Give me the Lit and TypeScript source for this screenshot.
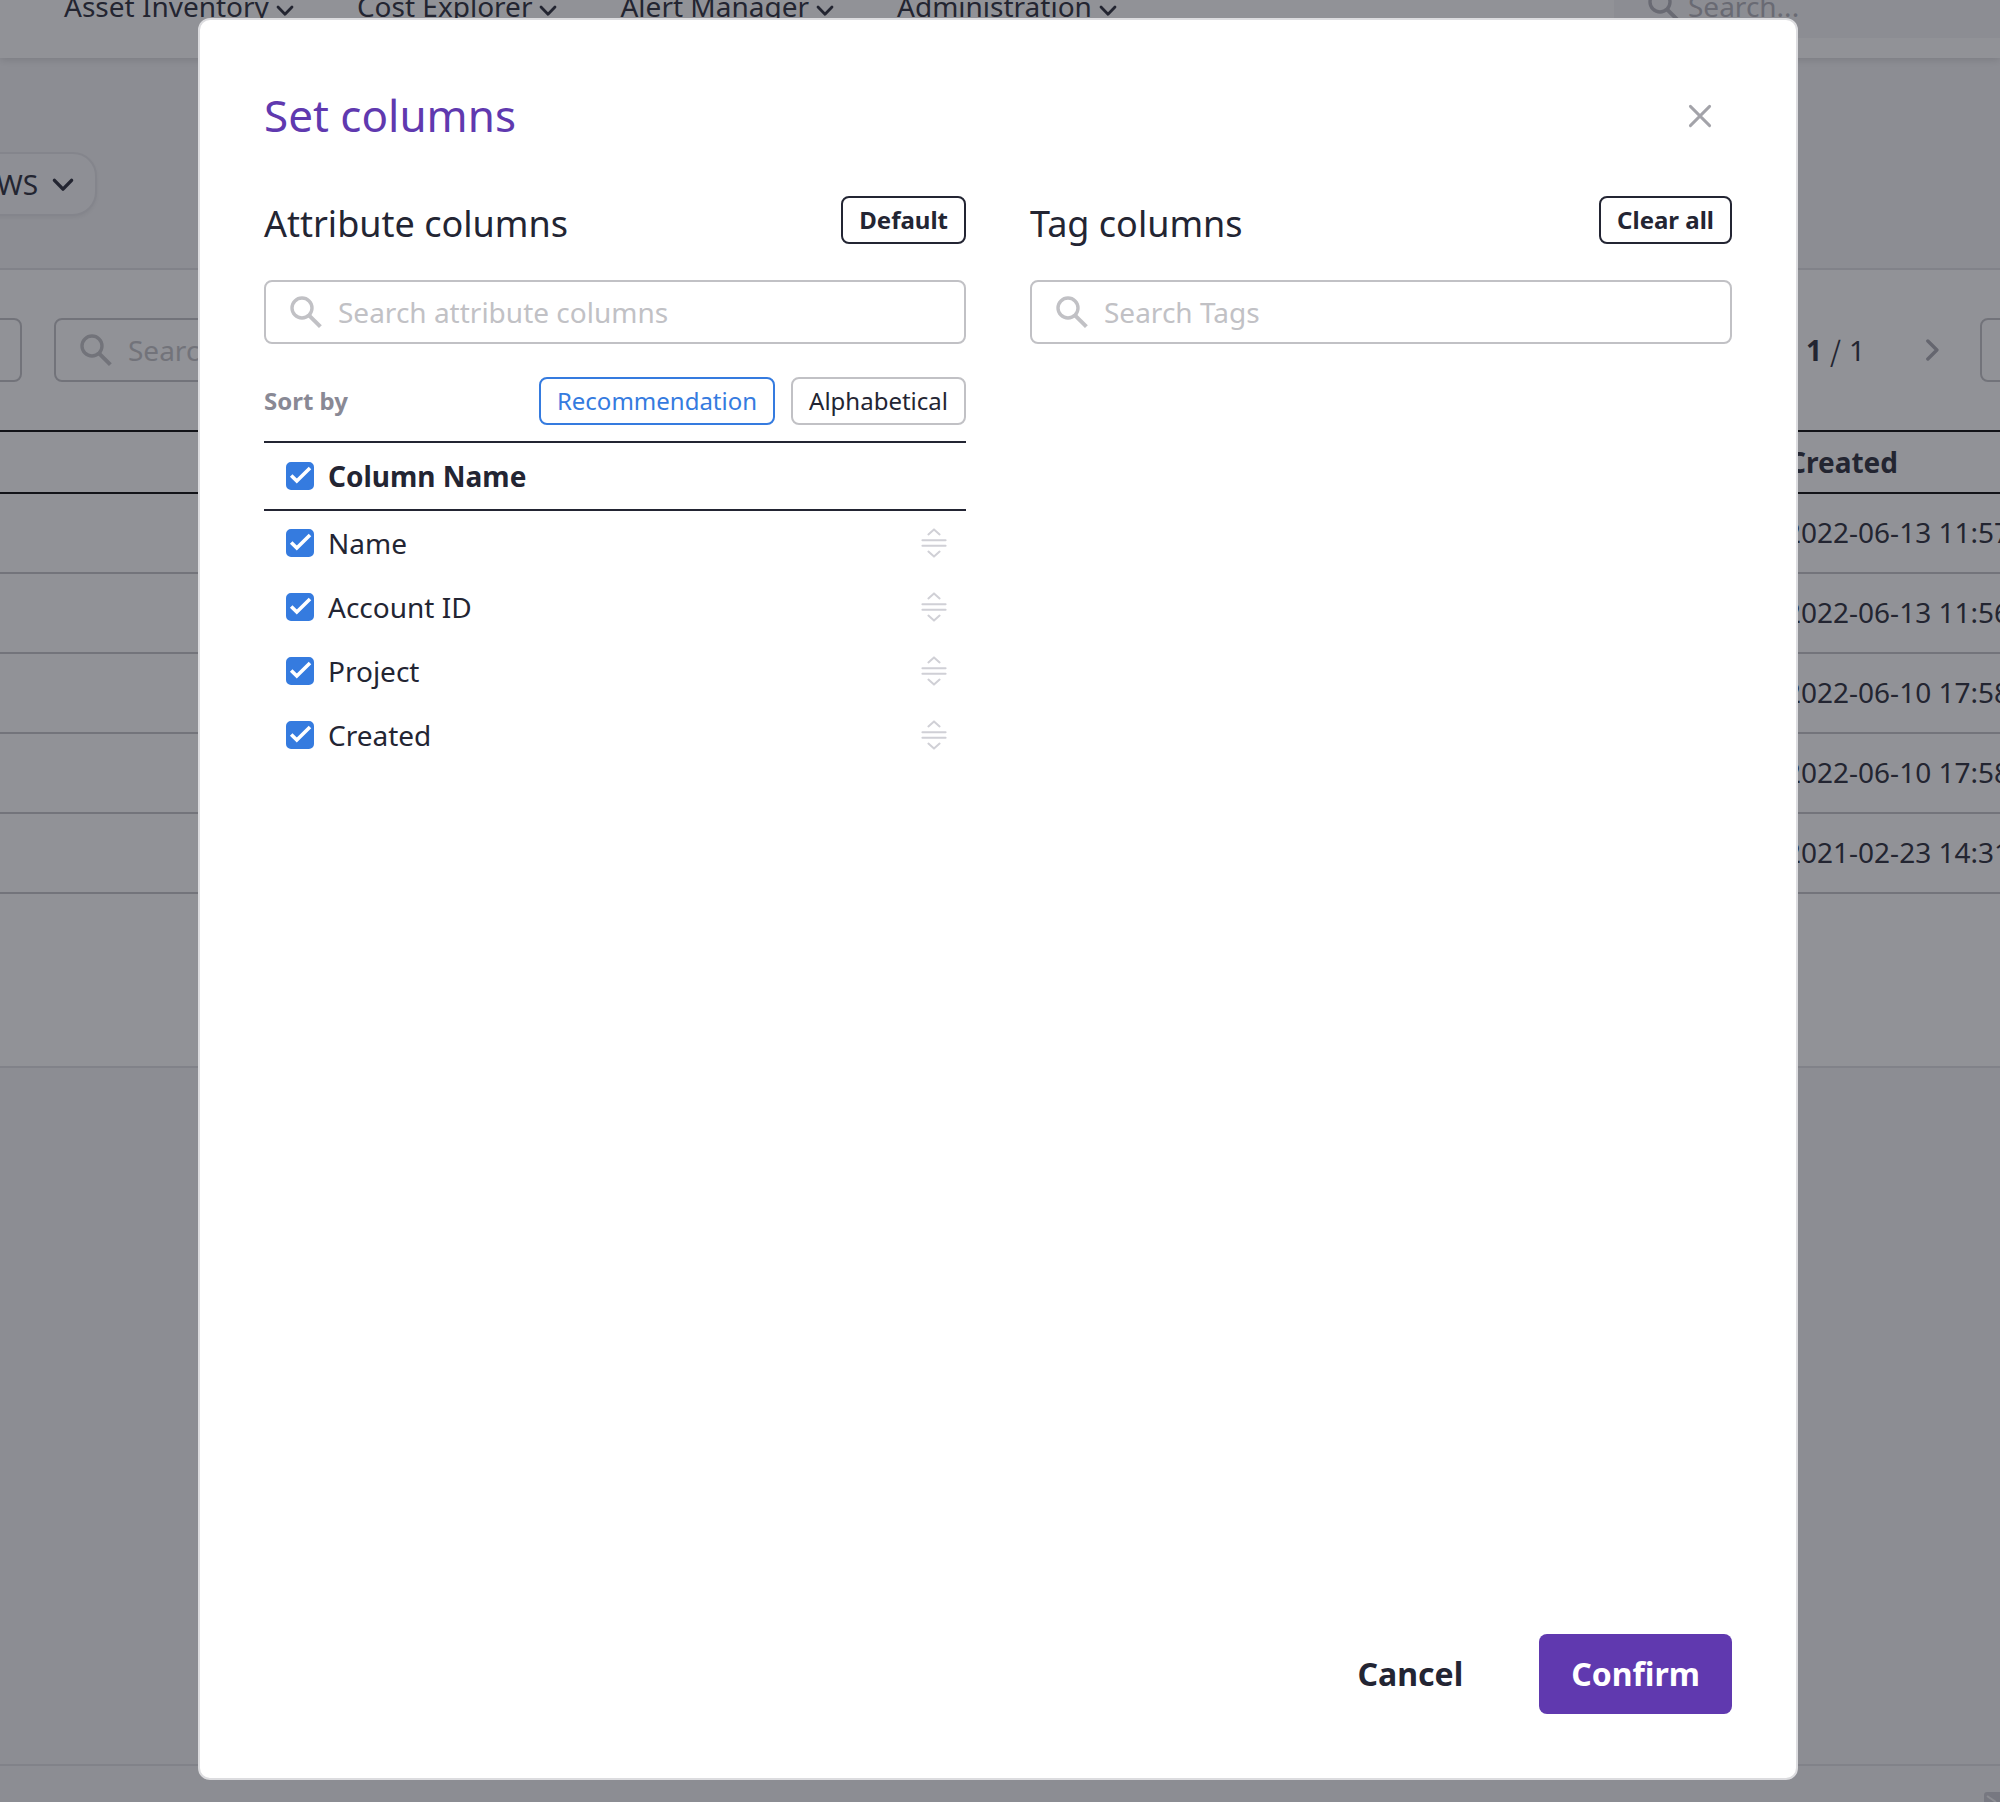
import { LitElement, html, css, svg } from "lit";
import { customElement, property, state } from "lit/decorators.js";
import { classMap } from "lit/directives/class-map.js";

const searchIcon = html`<svg class="search-icon" width="32" height="32" viewBox="0 0 32 32" fill="none" stroke="currentColor" aria-hidden="true">
  <circle cx="12" cy="12" r="10" stroke-width="3.4" />
  <path d="M19 19.4 30.4 30.6" stroke-width="4" />
</svg>`;

const chevron = (size: number, dir: "down" | "right") => html`<svg
  width=${size} height=${size} viewBox="0 0 18 18" fill="none" stroke="currentColor" stroke-width="2.8"
  stroke-linecap="round" stroke-linejoin="round" aria-hidden="true">
  ${dir === "down" ? svg`<path d="M2 6 9 13.2 16 6" />` : svg`<path d="M5.6 1.6 13 9 5.6 16.4" />`}
</svg>`;

const shared = css`
  * { box-sizing: border-box; margin: 0; }
  button, input { font: inherit; color: inherit; }
  button { cursor: pointer; background: none; border: 0; padding: 0; }
  svg { display: block; flex: none; }
  .search {
    display: flex;
    align-items: center;
    gap: 16px;
    height: 64px;
    padding: 0 24px;
    border: 2px solid #c1c1c5;
    border-radius: 8px;
    color: #c1c1c5;
  }
  .search input {
    flex: 1;
    min-width: 0;
    border: 0;
    outline: 0;
    padding: 0;
    background: none;
    color: #232533;
    font-size: 28px;
  }
  .search input::placeholder { color: #c1c1c5; opacity: 1; }
`;

@customElement("inventory-page")
class InventoryPage extends LitElement {
  static styles = [shared, css`
    :host { display: flex; flex-direction: column; height: 100%; background: #f5f5f7; }
    .header {
      position: relative;
      flex: none;
      display: flex;
      align-items: center;
      justify-content: space-between;
      height: 104px;
      margin-top: -46px;
      padding-left: 64px;
      background: #fff;
      box-shadow: 0 2px 8px rgba(0, 0, 0, 0.14);
    }
    .nav { display: flex; gap: 63px; }
    .nav a { display: flex; align-items: center; gap: 7px; color: inherit; text-decoration: none; white-space: nowrap; }
    .nav svg { margin-top: 8px; }
    .header .search { width: 386px; padding: 0 34px; gap: 8px; border: 0; border-radius: 12px 0 0 12px; background: #f5f5f7; color: #aeaeb6; }
    .header .search input::placeholder { color: #aeaeb6; }
    .provider {
      align-self: flex-start;
      flex: none;
      display: flex;
      align-items: center;
      gap: 14px;
      height: 64px;
      margin: 94px 0 52px -62px;
      padding: 0 21px 0 40px;
      border: 2px solid #e4e4e8;
      border-radius: 24px;
      background: #f8f8fa;
      box-shadow: 0 2px 4px rgba(0, 0, 0, 0.06);
    }
    .panel { flex: none; min-height: 800px; padding-top: 48px; border: solid #dfdfe3; border-width: 2px 0; background: #fff; }
    .toolbar { display: flex; align-items: center; height: 64px; margin-bottom: 48px; }
    .box { width: 64px; height: 64px; border: 2px solid #c1c1c5; border-radius: 8px; }
    .box.lead { margin: 0 32px 0 -42px; }
    .toolbar .search { width: 1200px; }
    .pager { display: flex; align-items: center; gap: 56px; margin-left: auto; }
    .pager p { display: flex; gap: 8px; }
    .pager .slash { font-family: "Noto Sans CJK KR", "Noto Sans", sans-serif; }
    .pager button { color: #a7a7af; }
    .box.tail { margin: 0 -44px 0 37px; }
    table { width: 100%; border-collapse: separate; border-spacing: 0; table-layout: fixed; text-align: left; }
    th, td { padding: 0; white-space: nowrap; }
    th { height: 64px; border: solid #000; border-width: 2px 0; }
    td { height: 80px; padding-bottom: 2px; border-bottom: 2px solid #c3c3c7; }
    th.date { width: 215px; padding-left: 3px; }
    .footer { flex: none; height: 38px; margin-top: auto; border-top: 2px solid #dfdfe3; display: flex; justify-content: flex-end; align-items: flex-end; }
  `];

  private nav = ["Asset Inventory", "Cost Explorer", "Alert Manager", "Administration"];
  private dates = ["2022-06-13 11:57", "2022-06-13 11:56", "2022-06-10 17:58", "2022-06-10 17:58", "2021-02-23 14:31"];

  render() {
    return html`
      <header class="header">
        <nav class="nav">${this.nav.map((n) => html`<a href="#">${n}${chevron(18, "down")}</a>`)}</nav>
        <label class="search">${searchIcon}<input aria-label="Search" placeholder="Search..." /></label>
      </header>
      <button class="provider">AWS ${chevron(22, "down")}</button>
      <section class="panel">
        <div class="toolbar">
          <div class="box lead"></div>
          <label class="search">${searchIcon}<input aria-label="Search" placeholder="Search" /></label>
          <div class="pager">
            <p><b>1</b><span class="slash">/</span><span>1</span></p>
            <button aria-label="Next page">${chevron(22, "right")}</button>
          </div>
          <div class="box tail"></div>
        </div>
        <table>
          <thead><tr><th></th><th class="date">Created</th></tr></thead>
          <tbody>${this.dates.map((d) => html`<tr><td></td><td>${d}</td></tr>`)}</tbody>
        </table>
      </section>
      <footer class="footer">
        <svg width="16" height="10" viewBox="0 0 16 10" aria-hidden="true">
          <path d="M0 10V3a3 3 0 0 1 3-3h13v10z" fill="#cbcbd2" />
          <path d="M3 4 12 10" stroke="#f5f5f7" stroke-width="2" />
        </svg>
      </footer>
    `;
  }
}

@customElement("check-field")
class CheckField extends LitElement {
  static styles = [shared, css`
    :host { display: block; }
    label { display: flex; align-items: center; gap: 14px; cursor: pointer; }
    .mark { display: grid; width: 28px; height: 28px; }
    .mark > * { grid-area: 1 / 1; }
    input { appearance: none; width: 28px; height: 28px; border: 2px solid #c1c1c5; border-radius: 5px; background: #fff; }
    input:checked { border-color: #357bdf; background: #357bdf; }
    svg { pointer-events: none; }
    input:not(:checked) + svg { visibility: hidden; }
  `];
  @property() label = "";
  @property({ type: Boolean }) checked = false;

  private toggled(e: Event) {
    this.checked = (e.target as HTMLInputElement).checked;
    this.dispatchEvent(new CustomEvent("toggled", { detail: this.checked }));
  }

  render() {
    return html`<label>
      <span class="mark">
        <input type="checkbox" .checked=${this.checked} @change=${this.toggled} />
        <svg width="28" height="28" viewBox="0 0 28 28" fill="none" stroke="#fff" stroke-width="3.6" aria-hidden="true">
          <path d="M5.2 13.4 10.8 19 24 6" />
        </svg>
      </span>
      ${this.label}
    </label>`;
  }
}

@customElement("set-columns-dialog")
class SetColumnsDialog extends LitElement {
  static styles = [shared, css`
    :host {
      display: flex;
      flex-direction: column;
      width: 100%;
      max-width: 1600px;
      box-sizing: border-box;
      padding: 64px;
      border: 2px solid #dcdcdf;
      border-radius: 12px;
      background: #fff;
    }
    .title-row { display: flex; align-items: flex-start; justify-content: space-between; height: 64px; margin-bottom: 48px; }
    h2 { font-size: 44px; line-height: 62px; font-weight: 400; color: #6039af; }
    .close { display: grid; place-items: center; width: 64px; height: 64px; color: #a3a3a9; }
    .columns { flex: 1; display: grid; grid-template-columns: 1fr 1fr; gap: 64px; align-items: start; }
    .heading { display: flex; align-items: flex-start; justify-content: space-between; margin-bottom: 28px; height: 56px; }
    h3 { font-size: 36px; line-height: 56px; font-weight: 400; }
    .small {
      height: 48px;
      padding: 0 16px;
      border: 2px solid #c1c1c5;
      border-radius: 8px;
      font-size: 24px;
      line-height: 44px;
    }
    .small.strong { border-color: #232533; font-weight: 700; }
    .small.active { border-color: #357bdf; color: #357bdf; }
    .sort { display: flex; align-items: center; gap: 16px; margin: 33px 0 16px; }
    .sort span { margin-right: auto; font-size: 24px; font-weight: 700; color: #898995; }
    .list-head { display: flex; align-items: center; height: 70px; padding: 0 22px; border: solid #232533; border-width: 2px 0; font-weight: 700; }
    ul { list-style: none; padding: 0; }
    li { display: flex; align-items: center; justify-content: space-between; height: 64px; padding: 0 16px 0 22px; }
    .actions { display: flex; justify-content: flex-end; gap: 44px; font-size: 32px; font-weight: 700; }
    .actions button { height: 80px; padding: 0 32px; border-radius: 8px; }
    .confirm { background: #6039af; color: #fff; }
  `];

  @state() private sortBy = "Recommendation";
  @state() private rows = ["Name", "Account ID", "Project", "Created"].map((name) => ({ name, on: true }));

  private setAll(on: boolean) {
    this.rows = this.rows.map((r) => ({ ...r, on }));
  }

  private setRow(i: number, on: boolean) {
    this.rows = this.rows.map((r, j) => (j === i ? { ...r, on } : r));
  }

  render() {
    return html`
      <div class="title-row">
        <h2>Set columns</h2>
        <button class="close" aria-label="Close">
          <svg width="24" height="24" viewBox="0 0 24 24" stroke="currentColor" stroke-width="2.9" stroke-linecap="round" aria-hidden="true">
            <path d="M2.4 2.4 21.6 21.6M21.6 2.4 2.4 21.6" />
          </svg>
        </button>
      </div>
      <div class="columns">
        <section>
          <div class="heading"><h3>Attribute columns</h3><button class="small strong" @click=${() => this.setAll(true)}>Default</button></div>
          <label class="search">${searchIcon}<input aria-label="Search attribute columns" placeholder="Search attribute columns" /></label>
          <div class="sort">
            <span>Sort by</span>
            ${["Recommendation", "Alphabetical"].map((s) => html`<button
              class=${classMap({ small: true, active: s === this.sortBy })}
              @click=${() => (this.sortBy = s)}>${s}</button>`)}
          </div>
          <div class="list-head">
            <check-field label="Column Name" .checked=${this.rows.every((r) => r.on)}
              @toggled=${(e: CustomEvent) => this.setAll(e.detail)}></check-field>
          </div>
          <ul>
            ${this.rows.map((r, i) => html`<li>
              <check-field label=${r.name} .checked=${r.on} @toggled=${(e: CustomEvent) => this.setRow(i, e.detail)}></check-field>
              <svg width="32" height="32" viewBox="0 0 32 32" fill="none" stroke="#d0d0d6" stroke-width="2" stroke-linecap="round" stroke-linejoin="round" aria-hidden="true">
                <path d="M10.4 7.4 16 2.4 21.6 7.4M10.4 24.6 16 29.6 21.6 24.6M4.4 13.3H27.6M4.4 18.7H27.6" />
              </svg>
            </li>`)}
          </ul>
        </section>
        <section>
          <div class="heading"><h3>Tag columns</h3><button class="small strong">Clear all</button></div>
          <label class="search">${searchIcon}<input aria-label="Search Tags" placeholder="Search Tags" /></label>
        </section>
      </div>
      <div class="actions">
        <button>Cancel</button>
        <button class="confirm">Confirm</button>
      </div>
    `;
  }
}

@customElement("app-root")
class AppRoot extends LitElement {
  static styles = css`
    :host {
      display: block;
      position: relative;
      height: 100vh;
      overflow: hidden;
      font-family: "Noto Sans", sans-serif;
      font-size: 28px;
      line-height: 40px;
      color: #232533;
    }
    .backdrop {
      position: absolute;
      inset: 0;
      z-index: 2;
      display: flex;
      justify-content: center;
      box-sizing: border-box;
      padding: 18px 4px 22px 0;
      background: rgba(35, 37, 47, 0.5);
    }
  `;

  render() {
    return html`
      <inventory-page></inventory-page>
      <div class="backdrop">
        <set-columns-dialog role="dialog" aria-modal="true" aria-label="Set columns"></set-columns-dialog>
      </div>
    `;
  }
}
